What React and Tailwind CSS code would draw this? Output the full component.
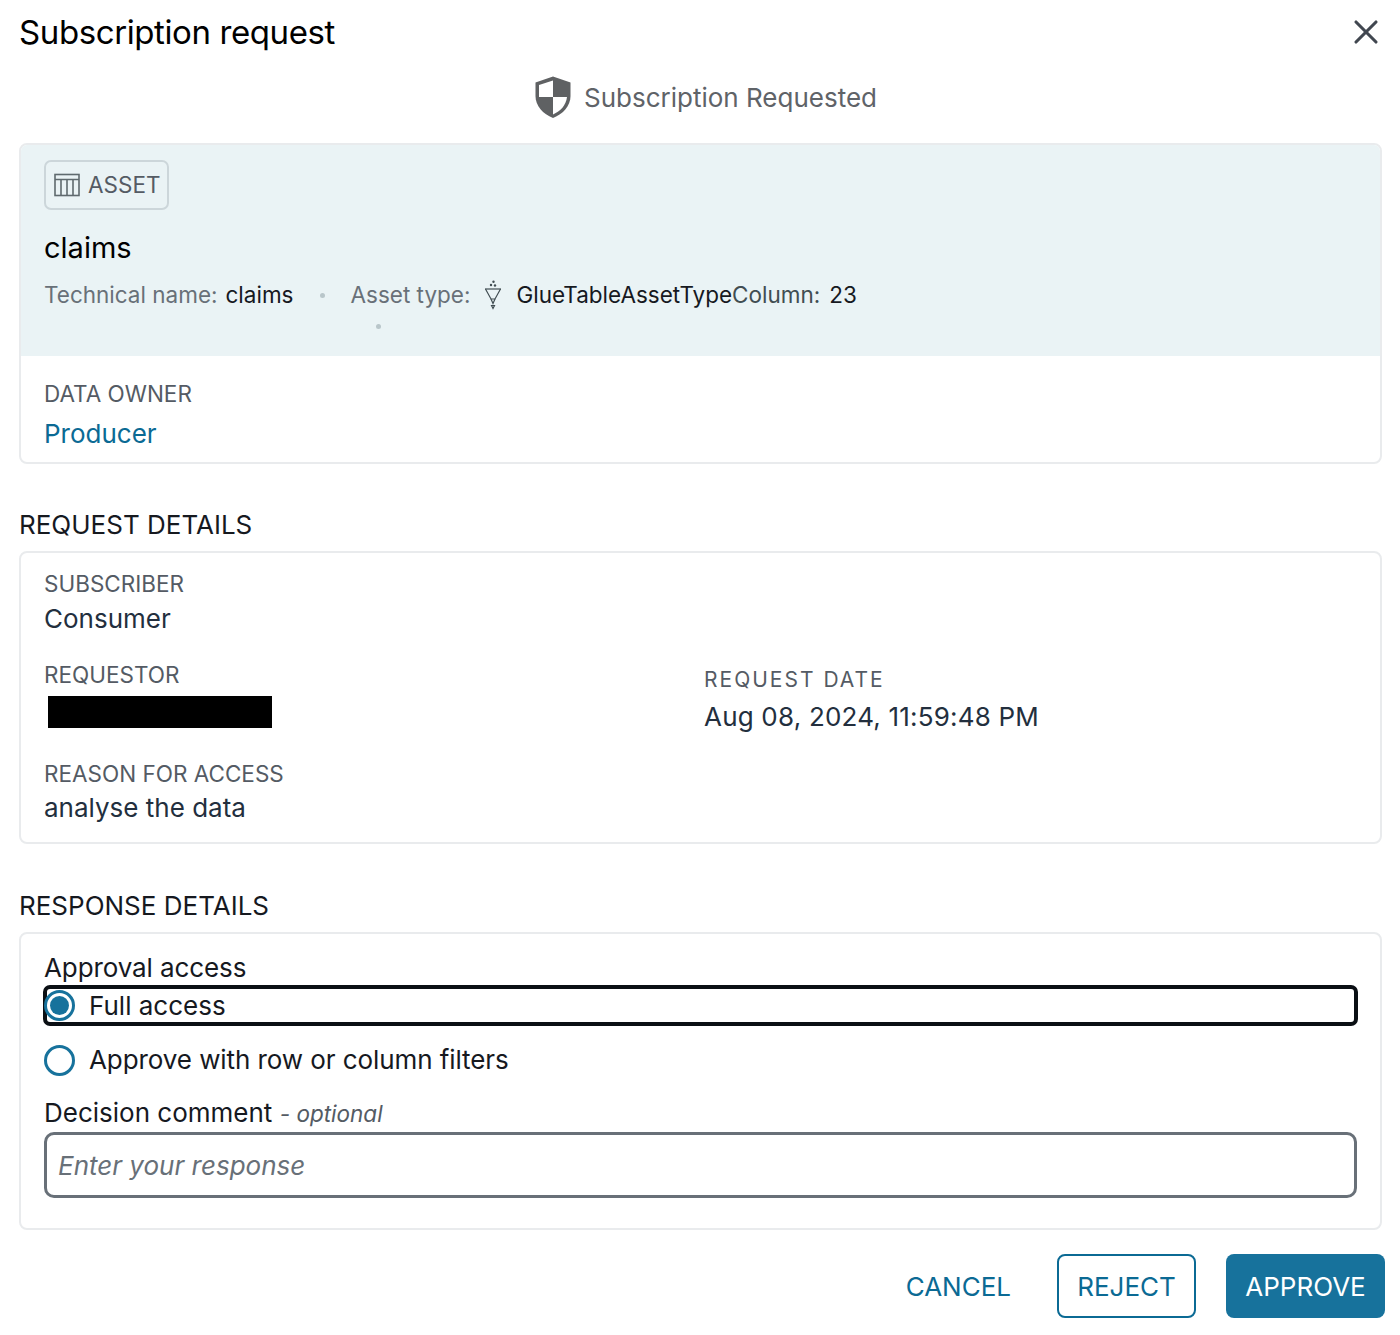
import React from 'react';
import { X } from 'lucide-react';

const font = { fontFamily: 'Inter, "Liberation Sans", sans-serif' };

const ShieldIcon = () => (
  <svg width="36" height="42" viewBox="0 0 36 42">
    <path d="M18 0.5 L35.5 6.5 V20 C35.5 30 28 38 18 42 C8 38 0.5 30 0.5 20 V6.5 Z" fill="#5f6163" />
    <path d="M18 4.5 V21 H4 V9 Z" fill="#fff" />
    <path d="M18 21 H32 C31 29.5 25.5 35 18 38.5 Z" fill="#fff" />
  </svg>
);

const TableIcon = () => (
  <svg width="26" height="24" viewBox="0 0 26 24" fill="none" stroke="#5f6a6e" strokeWidth="1.6">
    <rect x="1" y="1.5" width="24" height="21" />
    <path d="M1 6.5H25" />
    <path d="M7 6.5V22.5M13 6.5V22.5M19 6.5V22.5" />
  </svg>
);

const FunnelIcon = () => (
  <svg width="20" height="30" viewBox="0 0 20 30" fill="none" stroke="#414d52" strokeWidth="1.2">
    <circle cx="10.5" cy="1.8" r="1.2" fill="#414d52" stroke="none" />
    <circle cx="8" cy="5" r="1.2" fill="#414d52" stroke="none" />
    <circle cx="12" cy="5.5" r="1.2" fill="#414d52" stroke="none" />
    <path d="M2 9H18" />
    <path d="M2.5 9L8 19H12L17.5 9" />
    <path d="M8 19L10 23.5L12 19" />
    <path d="M8.5 25.5L10 28.5L11.5 25.5Z" />
  </svg>
);

const Dot = () => <span className="inline-block w-[5px] h-[5px] rounded-full bg-[#b9c6ca]" />;

const Label = ({ children }) => (
  <div className="text-[22.5px] leading-[28px] text-[#545b64]">{children}</div>
);

const App = () => {
  return (
    <div style={font} className="w-[1400px] h-[1335px] bg-white text-[#16191f] pl-[19px] pr-[18px] overflow-hidden">
      {/* title */}
      <div className="h-[66px] flex items-center justify-between">
        <h1 className="text-[33px] leading-[40px] -mt-[2px] text-black tracking-[-0.4px]">Subscription request</h1>
        <X size={40} strokeWidth={1.9} className="text-[#414750] -mr-[4px] -mt-[2px]" />
      </div>

      <div className="h-[77px] flex items-center justify-center gap-[13px] pb-[15px] pl-[11px]">
        <ShieldIcon />
        <span className="text-[26px] text-[#5f6368]">Subscription Requested</span>
      </div>

      {/* asset card */}
      <div className="border-2 border-[#e9ebed] rounded-[8px] h-[321px] overflow-hidden">
        <div className="bg-[#eaf3f5] h-[211px] pt-[15px] pl-[23px]">
          <div className="w-[125px] h-[50px] border-2 border-[#ccd6da] rounded-[7px] flex items-center gap-[8px] pl-[8px] text-[22.5px] text-[#545b64]">
            <TableIcon />
            ASSET
          </div>
          <div className="text-[29px] leading-[38px] text-black mt-[19px]">claims</div>
          <div className="flex items-center text-[22.5px] leading-[30px] mt-[13px]">
            <span className="text-[#687078]">Technical name:</span>
            <span className="ml-[8px] text-[#16191f]">claims</span>
            <span className="ml-[26px] flex"><Dot /></span>
            <span className="ml-[26px] text-[#687078]">Asset type:</span>
            <span className="ml-[13px] -mt-[1px]"><FunnelIcon /></span>
            <span className="ml-[13px]">GlueTableAssetType</span>
            <span className="text-[#414d52]">Column:</span>
            <span className="ml-[9px]">23</span>
          </div>
          <div className="ml-[332px] mt-[14px] flex"><Dot /></div>
        </div>
        <div className="pl-[23px] pt-[24px]">
          <Label>DATA OWNER</Label>
          <div className="text-[26px] leading-[34px] text-[#0b6a94] mt-[9px]">Producer</div>
        </div>
      </div>

      {/* request details */}
      <h2 className="text-[26px] leading-[32px] text-[#16191f] mt-[45px]">REQUEST DETAILS</h2>
      <div className="border-2 border-[#e9ebed] rounded-[8px] h-[293px] mt-[10px] pl-[23px] pt-[17px]">
        <Label>SUBSCRIBER</Label>
        <div className="text-[26px] leading-[34px] mt-[4px] text-[#232f3e]">Consumer</div>
        <div className="grid grid-cols-[660px_1fr] mt-[25px]">
          <div>
            <Label>REQUESTOR</Label>
            <div className="w-[224px] h-[32px] bg-black ml-[4px] mt-[7px]" />
          </div>
          <div className="pt-[5px]">
            <div className="text-[21px] leading-[28px] tracking-[2px] text-[#545b64]">REQUEST DATE</div>
            <div className="text-[26px] leading-[34px] mt-[6px] tracking-[0.2px] text-[#232f3e]">Aug 08, 2024, 11:59:48 PM</div>
          </div>
        </div>
        <div className="mt-[26px]">
          <Label>REASON FOR ACCESS</Label>
          <div className="text-[26px] leading-[34px] mt-[3px] text-[#232f3e]">analyse the data</div>
        </div>
      </div>

      {/* response details */}
      <h2 className="text-[26px] leading-[32px] text-[#16191f] mt-[46px]">RESPONSE DETAILS</h2>
      <div className="border-2 border-[#e9ebed] rounded-[8px] h-[298px] mt-[10px] pl-[23px] pr-[22px] pt-[18px]">
        <div className="text-[26px] leading-[32px] text-[#16191f] tracking-[-0.1px]">Approval access</div>
        <div className="h-[41px] mt-[1px] -ml-[1px] border-[4px] border-[#0a0f14] rounded-[7px] flex items-center">
          <span className="w-[31px] h-[31px] -ml-[3px] rounded-full border-[3px] border-[#17729c] bg-white flex items-center justify-center shrink-0">
            <span className="w-[19px] h-[19px] rounded-full bg-[#17729c]" />
          </span>
          <span className="ml-[14px] mt-[1px] text-[26px] leading-[32px] text-[#16191f]">Full access</span>
        </div>
        <div className="h-[32px] mt-[18px] flex items-center">
          <span className="w-[31px] h-[31px] rounded-full border-[3px] border-[#17729c] bg-white shrink-0" />
          <span className="ml-[15px] -translate-x-[1px] text-[26px] leading-[32px] tracking-[-0.08px] text-[#16191f]">Approve with row or column filters</span>
        </div>
        <div className="mt-[21px] text-[26px] leading-[32px] text-[#16191f]">
          Decision comment <span className="text-[22.5px] italic text-[#545b64]">- optional</span>
        </div>
        <input
          placeholder="Enter your response"
          className="block w-[1313px] h-[66px] mt-[2px] border-[3px] border-[#687078] rounded-[10px] px-[11px] text-[26px] italic outline-none placeholder:text-[#687078]"
        />
      </div>

      {/* actions */}
      <div className="flex items-center justify-end mt-[24px] -mr-[3px]">
        <button className="text-[26px] text-[#0b6a94] mr-[46px]">CANCEL</button>
        <button className="w-[139px] h-[64px] border-2 border-[#0b6a94] rounded-[8px] text-[26px] text-[#0b6a94] mr-[30px]">REJECT</button>
        <button className="w-[159px] h-[64px] bg-[#17729c] rounded-[8px] text-[26px] text-white">APPROVE</button>
      </div>
    </div>
  );
};

export default App;
